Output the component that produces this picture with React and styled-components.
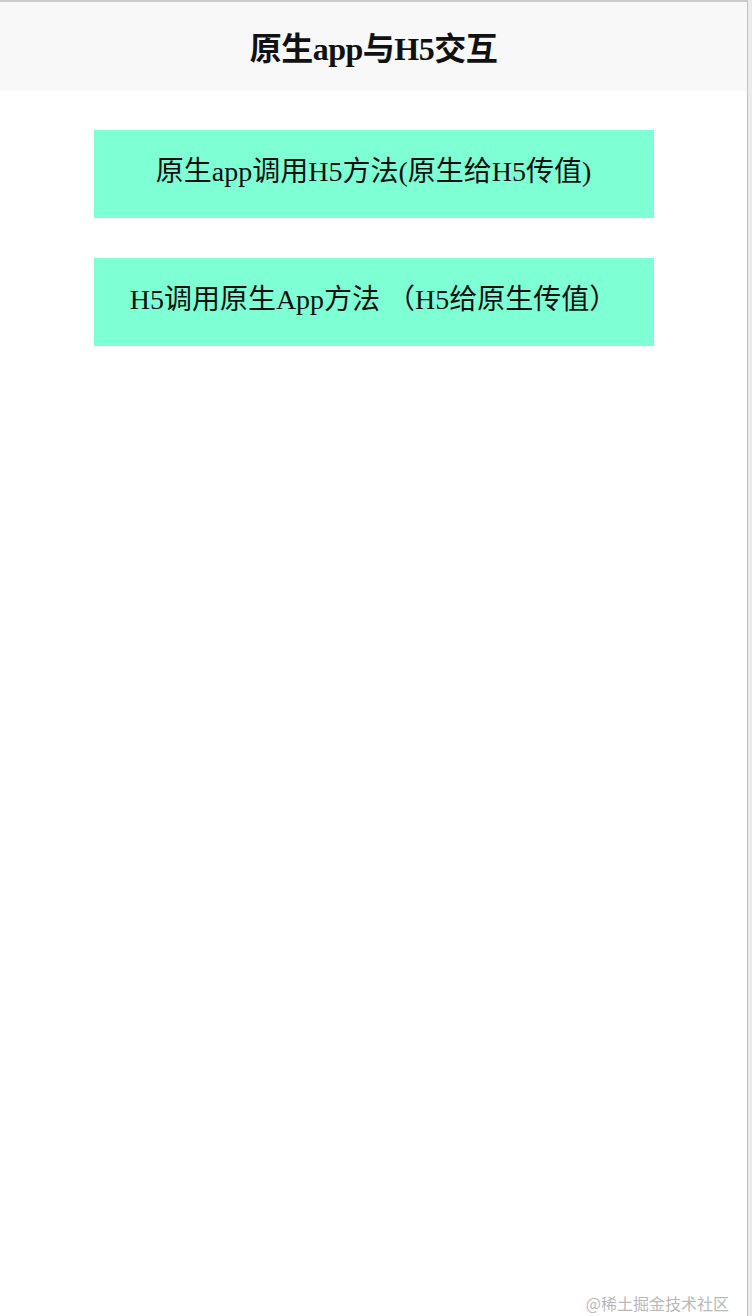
import React from "react";
import styled, { createGlobalStyle } from "styled-components";

const GlobalStyle = createGlobalStyle`
  html, body {
    margin: 0;
    padding: 0;
    background: #ebebeb;
  }
  #root {
    min-height: 100vh;
  }
`;

const Screen = styled.div`
  position: relative;
  box-sizing: border-box;
  min-height: 100vh;
  margin-right: 4px;
  background: #ffffff;
  border-top: 2px solid #cccccc;
  border-right: 1px solid #c2c2c2;
  overflow: hidden;
  font-family: "Liberation Serif", "Noto Sans CJK SC", serif;
  color: #111111;
`;

const Header = styled.header`
  height: 88px;
  display: flex;
  align-items: center;
  justify-content: center;
  background: #f8f8f8;
`;

const Title = styled.h1`
  margin: 0;
  font-size: 32px;
  font-weight: bold;
  letter-spacing: -0.5px;
`;

const Actions = styled.main`
  display: flex;
  flex-direction: column;
  align-items: center;
  gap: 40px;
  padding-top: 40px;
`;

const ActionButton = styled.button`
  width: 560px;
  height: 88px;
  border: none;
  background: #7fffd4;
  font-family: inherit;
  font-size: 28px;
  line-height: 1;
  color: #111111;
  cursor: pointer;
  padding: 0 0 4px;
`;

const Watermark = styled.div`
  position: absolute;
  right: 18px;
  bottom: 3px;
  font-family: "Noto Sans CJK SC", "Noto Sans", sans-serif;
  font-size: 16px;
  line-height: 1.1;
  color: #b8b8b8;
`;

const actions = [
  "原生app调用H5方法(原生给H5传值)",
  "H5调用原生App方法 （H5给原生传值）",
];

export default function App() {
  return (
    <>
      <GlobalStyle />
      <Screen>
        <Header>
          <Title>原生app与H5交互</Title>
        </Header>
        <Actions>
          {actions.map((label) => (
            <ActionButton key={label}>{label}</ActionButton>
          ))}
        </Actions>
        <Watermark>@稀土掘金技术社区</Watermark>
      </Screen>
    </>
  );
}
